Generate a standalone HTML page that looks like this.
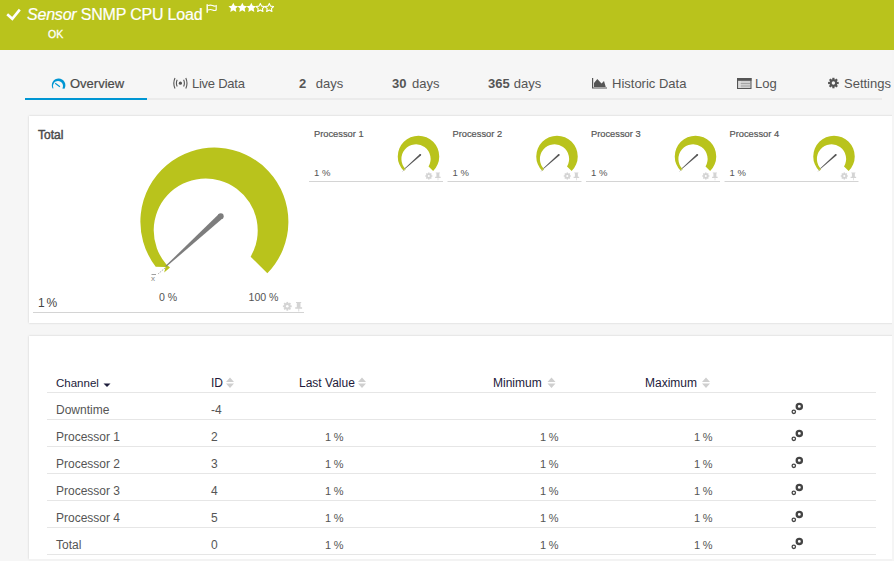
<!DOCTYPE html>
<html><head><meta charset="utf-8">
<style>
*{margin:0;padding:0;box-sizing:border-box}
html,body{width:894px;height:561px;overflow:hidden;background:#f6f6f6;font-family:"Liberation Sans",sans-serif;position:relative}
.a{position:absolute;white-space:nowrap}
#hdr{position:absolute;left:0;top:0;width:894px;height:50px;background:#b9c31c}
.title{left:27px;top:5px;font-size:16px;letter-spacing:-0.2px;color:#fff;line-height:20px;-webkit-text-stroke:0.2px #fff}
.ok{left:48px;top:27px;font-size:10.5px;color:#fff;line-height:14px;-webkit-text-stroke:0.3px #fff}
.tab{top:76px;font-size:13px;color:#555;line-height:16px}
.tab b{font-weight:bold;color:#555}
.panel{position:absolute;background:#fff;box-shadow:0 0 2px rgba(0,0,0,.18)}
.lbl{font-size:12px;color:#444;line-height:14px}
.sm{font-size:9.5px;color:#555;line-height:12px}
.th{font-size:12px;color:#221a3a;line-height:14px}
.td{font-size:12px;color:#555;line-height:14px}
.pc{font-size:11px;word-spacing:-0.3px}
.hl{position:absolute;height:1px;background:#e6e6e6}
</style></head><body>
<div id="hdr"></div>
<svg class="a" style="left:0;top:0" width="300" height="50" viewBox="0 0 300 50">
  <path d="M7.2 14.2 L12.3 18.8 L19.8 9.6" fill="none" stroke="#fff" stroke-width="2.6"/>
  <!-- flag -->
  <path d="M207.2 4.2 V12.8" stroke="#fff" stroke-width="1.4"/><path d="M208 5.6 Q210.5 4.6 212.5 5.6 Q214.5 6.6 216.2 5.6 V10 Q214.5 11 212.5 10 Q210.5 9 208 10" fill="none" stroke="#fff" stroke-width="1.1"/>
  <!-- stars -->
  <g fill="#fff">
    <path id="st" d="M233.30 2.70 L231.83 5.78 L228.45 6.22 L230.92 8.57 L230.30 11.93 L233.30 10.30 L236.30 11.93 L235.68 8.57 L238.15 6.22 L234.77 5.78 Z"/>
    <use href="#st" x="9"/><use href="#st" x="18"/>
  </g>
  <g fill="none" stroke="#fff" stroke-width="1.1" stroke-linejoin="round">
    <path d="M233.30 3.40 L232.01 6.12 L229.02 6.51 L231.21 8.58 L230.65 11.54 L233.30 10.10 L235.95 11.54 L235.39 8.58 L237.58 6.51 L234.59 6.12 Z" transform="translate(27 0) scale(1)"/><path d="M233.30 3.40 L232.01 6.12 L229.02 6.51 L231.21 8.58 L230.65 11.54 L233.30 10.10 L235.95 11.54 L235.39 8.58 L237.58 6.51 L234.59 6.12 Z" transform="translate(36 0)"/>
  </g>
</svg>
<div class="a title"><i>Sensor</i> SNMP CPU Load</div>
<div class="a ok">OK</div>

<!-- tabs -->
<div class="hl" style="left:25px;top:98px;width:857px;height:2px;background:#ebebeb"></div>
<div class="a" style="left:25px;top:98px;width:122px;height:2px;background:#0096d3"></div>
<svg class="a" style="left:50px;top:78px" width="18" height="13" viewBox="0 0 18 13"><path d="M2.60 10.49 A6.8 6.8 0 1 1 14.49 10.70 L12.33 10.50 A5.0 5.0 0 1 0 3.59 10.35 Z" fill="#0096d3"/><path d="M5.2 5.2 L9.9 8.7" stroke="#0096d3" stroke-width="1.2"/></svg>
<div class="a tab" style="left:70px;color:#4a4a4a;-webkit-text-stroke:0.2px #4a4a4a">Overview</div>
<svg class="a" style="left:172px;top:77px" width="17" height="13" viewBox="0 0 17 13"><circle cx="8.4" cy="6.2" r="1.6" fill="#555"/><path d="M5.2 2.8 Q3.6 6.2 5.2 9.6 M11.6 2.8 Q13.2 6.2 11.6 9.6 M3 1 Q0.6 6.2 3 11.4 M13.8 1 Q16.2 6.2 13.8 11.4" fill="none" stroke="#555" stroke-width="1.1"/></svg>
<div class="a tab" style="left:192px;letter-spacing:-0.25px">Live Data</div>
<div class="a tab" style="left:299px"><b>2</b><span style="margin-left:9.5px">days</span></div>
<div class="a tab" style="left:392px"><b>30</b><span style="margin-left:5.5px">days</span></div>
<div class="a tab" style="left:488px"><b>365</b><span style="margin-left:4px">days</span></div>
<svg class="a" style="left:591px;top:77px" width="17" height="13" viewBox="0 0 17 13"><path d="M1.6 1 V11 H16" fill="none" stroke="#555" stroke-width="1.2"/><path d="M3 10 V6 L6.3 2 L10.5 6.5 L13 4 L14.7 9.8 V10 Z" fill="#555"/></svg>
<div class="a tab" style="left:612px">Historic Data</div>
<svg class="a" style="left:737px;top:77px" width="15" height="13" viewBox="0 0 15 13"><rect x="0.5" y="1.5" width="13.5" height="10" fill="#d0d0d0" stroke="#555" stroke-width="1"/><rect x="0" y="1" width="14.5" height="2.8" fill="#555"/><path d="M3.5 6.5 H13 M3.5 9 H13" stroke="#999" stroke-width="0.8"/><path d="M3 4 V11" stroke="#eee" stroke-width="0.8"/></svg>
<div class="a tab" style="left:755px">Log</div>
<svg class="a" style="left:827px;top:77px" width="13" height="13" viewBox="0 0 13 13"><g fill="#555"><circle cx="6.4" cy="6" r="3.8"/><rect x="5.3" y="0.8" width="2.2" height="10.5"/><rect x="1.1" y="4.9" width="10.6" height="2.2"/><rect x="5.3" y="0.8" width="2.2" height="10.5" transform="rotate(45 6.4 6)"/><rect x="5.3" y="0.8" width="2.2" height="10.5" transform="rotate(-45 6.4 6)"/></g><circle cx="6.4" cy="6" r="1.7" fill="#f6f6f6"/></svg>
<div class="a tab" style="left:844px">Settings</div>

<!-- panel 1 -->
<div class="panel" style="left:29px;top:116px;width:880px;height:207px"></div>
<div class="a lbl" style="left:38px;top:128px;font-size:12px;color:#4a4a4a;-webkit-text-stroke:0.45px #4a4a4a">Total</div>
<svg class="a" style="left:0;top:0" width="894" height="330" viewBox="0 0 894 330"><defs><g id="gp" fill="#d4d4d4">
  <circle cx="0" cy="0" r="3.3"/>
  <rect x="-0.9" y="-4.4" width="1.8" height="8.8"/><rect x="-4.4" y="-0.9" width="8.8" height="1.8"/>
  <rect x="-0.9" y="-4.4" width="1.8" height="8.8" transform="rotate(45)"/><rect x="-0.9" y="-4.4" width="1.8" height="8.8" transform="rotate(-45)"/>
  <circle cx="0" cy="0" r="1.3" fill="#fff"/>
  <path d="M8.7 -4.4 H13.9 V-3.4 H13.2 V0.9 H14.8 V2.4 H11.9 V5.2 H11.1 V2.4 H7.9 V0.9 H9.5 V-3.4 H8.7 Z"/>
</g></defs>
  <path d="M155.7 266.7 A74 74 0 1 1 267.33 273.33 L250.65 256.65 A52 52 0 1 0 166.4 264.5 L170 267.5 L164.2 272.4 L165.5 267 Z" fill="#b9c31c"/>
  <path d="M218.84 214.06 L165.40 265.96 L166.20 266.84 L222.76 218.34 Z" fill="#7d7d7d"/><circle cx="220.8" cy="216.2" r="2.9" fill="#7d7d7d"/>
  <path d="M165 268 L158 274" stroke="#999" stroke-width="0.8" stroke-dasharray="1.5 1"/>
  <text x="151" y="281" font-size="8" fill="#888" font-family="Liberation Sans">x</text>
  <path d="M151.5 274.5 H156" stroke="#888" stroke-width="0.8"/>
  <rect x="33" y="312" width="271" height="1" fill="#d4d4d4"/>
  <g id="pg">
    <path d="M403.83 171.07 A20.75 20.75 0 1 1 433.17 171.07 L428.52 166.42 A14.6 14.6 0 1 0 405.68 169.22 Z" fill="#b9c31c"/>
    <path d="M419.70 154.13 L404.77 168.34 L405.23 168.86 L420.90 155.47 Z" fill="#555"/><circle cx="420.3" cy="154.8" r="0.9" fill="#555"/>
    <path d="M405 169 L402.5 171.5" stroke="#bbb" stroke-width="0.8"/>
    <rect x="309" y="181" width="134" height="1" fill="#d4d4d4"/>
    <use href="#gp" transform="translate(428.8 176) scale(0.8)"/>
  </g>
  <use href="#pg" x="138.5"/><use href="#pg" x="277"/><use href="#pg" x="415.5"/>
  <use href="#gp" transform="translate(287.3 306.3)"/>
</svg>
<div class="a sm" style="left:314px;top:128px;font-size:9.3px;-webkit-text-stroke:0.2px #555">Processor 1</div>
<div class="a sm" style="left:452.5px;top:128px;font-size:9.3px;-webkit-text-stroke:0.2px #555">Processor 2</div>
<div class="a sm" style="left:591px;top:128px;font-size:9.3px;-webkit-text-stroke:0.2px #555">Processor 3</div>
<div class="a sm" style="left:729.5px;top:128px;font-size:9.3px;-webkit-text-stroke:0.2px #555">Processor 4</div>
<div class="a sm" style="left:314px;top:166.5px">1 %</div>
<div class="a sm" style="left:452.5px;top:166.5px">1 %</div>
<div class="a sm" style="left:591px;top:166.5px">1 %</div>
<div class="a sm" style="left:729.5px;top:166.5px">1 %</div>
<div class="a lbl" style="left:38px;top:296px;word-spacing:-1.5px">1 %</div>
<div class="a sm" style="left:159px;top:291px;font-size:10.6px">0 %</div>
<div class="a sm" style="left:248.5px;top:291px;font-size:10.6px">100 %</div>

<!-- panel 2 -->
<div class="panel" style="left:29px;top:336px;width:880px;height:223px"></div>
<div class="a th" style="left:56px;top:376px;font-size:11.5px">Channel</div>
<div class="a th" style="left:211px;top:376px">ID</div>
<div class="a th" style="left:299px;top:376px">Last Value</div>
<div class="a th" style="left:493px;top:376px">Minimum</div>
<div class="a th" style="left:645px;top:376px">Maximum</div>
<svg class="a" style="left:0;top:370px" width="894" height="22" viewBox="0 370 894 22">
  <path d="M103.5 383.5 H110.5 L107 387 Z" fill="#1e1e3c"/>
  <g fill="#cfcfcf" id="so"><path d="M226 382 L230 377.5 L234 382 Z M226 383.5 H234 L230 388 Z"/></g>
  <use href="#so" x="132"/><use href="#so" x="321.5"/><use href="#so" x="476"/>
</svg>
<div class="hl" style="left:47px;top:392px;width:829px"></div>
<div class="hl" style="left:47px;top:419px;width:829px"></div>
<div class="hl" style="left:47px;top:446px;width:829px"></div>
<div class="hl" style="left:47px;top:473px;width:829px"></div>
<div class="hl" style="left:47px;top:500px;width:829px"></div>
<div class="hl" style="left:47px;top:527px;width:829px"></div>
<div class="hl" style="left:47px;top:554px;width:829px"></div>

<div class="a td" style="left:56px;top:403px">Downtime</div>
<div class="a td" style="left:211px;top:403px">-4</div>
<div class="a td" style="left:56px;top:430px">Processor 1</div>
<div class="a td" style="left:211px;top:430px">2</div>
<div class="a td" style="left:56px;top:457px">Processor 2</div>
<div class="a td" style="left:211px;top:457px">3</div>
<div class="a td" style="left:56px;top:484px">Processor 3</div>
<div class="a td" style="left:211px;top:484px">4</div>
<div class="a td" style="left:56px;top:511px">Processor 4</div>
<div class="a td" style="left:211px;top:511px">5</div>
<div class="a td" style="left:56px;top:538px">Total</div>
<div class="a td" style="left:211px;top:538px">0</div>

<div class="a td pc" style="left:325px;top:430px">1 %</div>
<div class="a td pc" style="left:325px;top:457px">1 %</div>
<div class="a td pc" style="left:325px;top:484px">1 %</div>
<div class="a td pc" style="left:325px;top:511px">1 %</div>
<div class="a td pc" style="left:325px;top:538px">1 %</div>
<div class="a td pc" style="left:540px;top:430px">1 %</div>
<div class="a td pc" style="left:540px;top:457px">1 %</div>
<div class="a td pc" style="left:540px;top:484px">1 %</div>
<div class="a td pc" style="left:540px;top:511px">1 %</div>
<div class="a td pc" style="left:540px;top:538px">1 %</div>
<div class="a td pc" style="left:694px;top:430px">1 %</div>
<div class="a td pc" style="left:694px;top:457px">1 %</div>
<div class="a td pc" style="left:694px;top:484px">1 %</div>
<div class="a td pc" style="left:694px;top:511px">1 %</div>
<div class="a td pc" style="left:694px;top:538px">1 %</div>

<svg class="a" style="left:0;top:392px" width="894" height="169" viewBox="0 392 894 169">
  <g id="gr" fill="none" stroke="#444">
    <circle cx="799.3" cy="406.4" r="2.6" stroke-width="2.3"/>
    <circle cx="793.8" cy="411.8" r="1.7" stroke-width="1.3"/>
  </g>
  <use href="#gr" y="27"/><use href="#gr" y="54"/><use href="#gr" y="81"/><use href="#gr" y="108"/><use href="#gr" y="135"/>
</svg>
<div class="a" style="left:892px;top:50px;width:2px;height:511px;background:#f5f5f5"></div>
<div class="a" style="left:29px;top:559px;width:863px;height:2px;background:#f3f3f3"></div>
</body></html>
